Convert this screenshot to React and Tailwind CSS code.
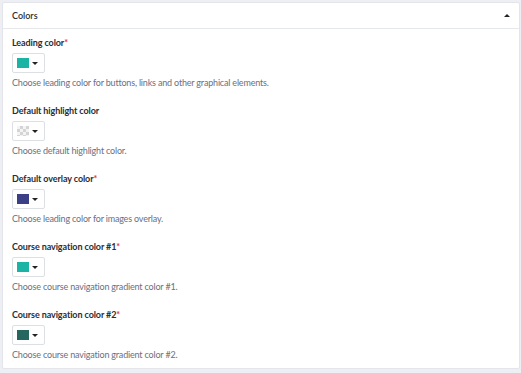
import React from "react";

const fields = [
  { label: "Leading color", required: true, color: "#1bb3a4", help: "Choose leading color for buttons, links and other graphical elements." },
  { label: "Default highlight color", required: false, color: null, help: "Choose default highlight color." },
  { label: "Default overlay color", required: true, color: "#3c3f86", help: "Choose leading color for images overlay." },
  { label: "Course navigation color #1", required: true, color: "#1bb3a4", help: "Choose course navigation gradient color #1." },
  { label: "Course navigation color #2", required: true, color: "#25665e", help: "Choose course navigation gradient color #2." },
];

const Checker = () => (
  <div className="w-[12px] h-[10px] bg-[linear-gradient(45deg,#d4d4d4_25%,transparent_25%,transparent_75%,#d4d4d4_75%),linear-gradient(45deg,#d4d4d4_25%,#f4f4f4_25%,#f4f4f4_75%,#d4d4d4_75%)] bg-[length:6px_6px] bg-[position:0_0,3px_3px]" />
);

const ColorField = ({ field }) => (
  <div className="flex flex-col">
    <div className="h-[12px] leading-[12px] text-[9px] font-bold tracking-[-0.1px] text-[#2b2d33]">
      {field.label}
      {field.required && <span className="text-[#e0334d]">*</span>}
    </div>
    <button className="mt-[4px] w-[33px] h-[20px] border border-[#dcdfe4] rounded-[2px] bg-white flex items-center pl-[4px] gap-[3px]">
      {field.color ? (
        <div className="w-[12px] h-[10px]" style={{ backgroundColor: field.color }} />
      ) : (
        <Checker />
      )}
      <span className="w-0 h-0 border-l-[3px] border-r-[3px] border-t-[3px] border-l-transparent border-r-transparent border-t-[#222]" />
    </button>
    <div className="mt-[4px] h-[12px] leading-[12px] text-[9px] tracking-[-0.18px] text-[#6b6f80]">{field.help}</div>
  </div>
);

export default function App() {
  return (
    <div className="w-[521px] h-[373px] bg-[#eeeff4] pt-[2px] px-[2px] font-['Lato',sans-serif]">
      <div className="w-[518px] h-[367px] bg-white border border-[#e3e5ea] rounded-[2px] flex flex-col">
        {/* header */}
        <div className="h-[26px] border-b border-[#e6e8ec] flex items-center justify-between pl-[9px] pr-[9px]">
          <span className="text-[9px] font-semibold text-[#2b2d33]">Colors</span>
          <span className="w-0 h-0 border-l-[3px] border-r-[3px] border-b-[3px] border-l-transparent border-r-transparent border-b-[#222]" />
        </div>
        {/* fields */}
        <div className="flex flex-col gap-[16px] pt-[8px] pl-[9px]">
          {fields.map((f) => (
            <ColorField key={f.label} field={f} />
          ))}
        </div>
      </div>
    </div>
  );
}
